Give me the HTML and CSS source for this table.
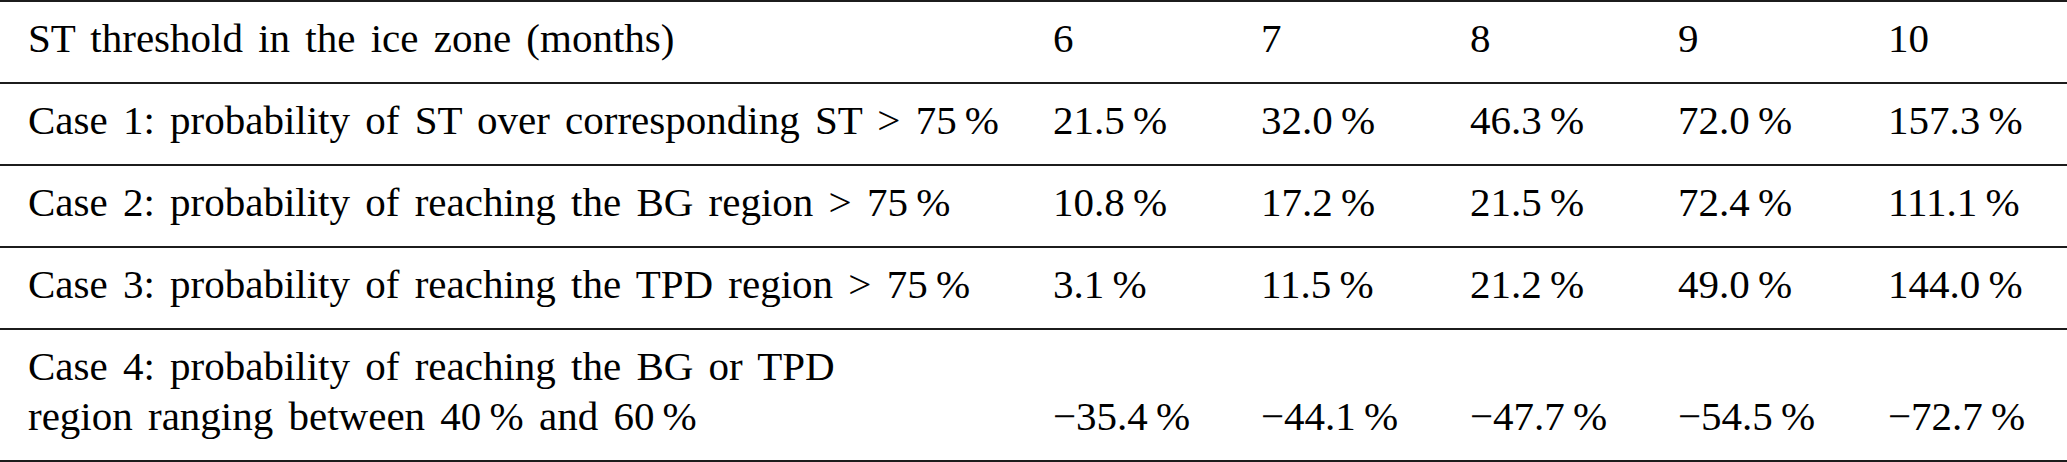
FILE: index.html
```html
<!DOCTYPE html>
<html lang="en">
<head>
    <meta charset="UTF-8">
    <title>ST threshold cases</title>
    <link rel="stylesheet" href="styles.css">
</head>
<body>
    <table class="results">
        <colgroup>
            <col class="col-label">
            <col class="col-6">
            <col class="col-7">
            <col class="col-8">
            <col class="col-9">
            <col class="col-10">
        </colgroup>
        <thead>
            <tr>
                <th class="label">ST threshold in the ice zone (months)</th>
                <th>6</th>
                <th>7</th>
                <th>8</th>
                <th>9</th>
                <th>10</th>
            </tr>
        </thead>
        <tbody>
            <tr>
                <td class="label">Case 1: probability of ST over corresponding ST &gt; 75&thinsp;%</td>
                <td>21.5&thinsp;%</td>
                <td>32.0&thinsp;%</td>
                <td>46.3&thinsp;%</td>
                <td>72.0&thinsp;%</td>
                <td>157.3&thinsp;%</td>
            </tr>
            <tr>
                <td class="label">Case 2: probability of reaching the BG region &gt; 75&thinsp;%</td>
                <td>10.8&thinsp;%</td>
                <td>17.2&thinsp;%</td>
                <td>21.5&thinsp;%</td>
                <td>72.4&thinsp;%</td>
                <td>111.1&thinsp;%</td>
            </tr>
            <tr>
                <td class="label">Case 3: probability of reaching the TPD region &gt; 75&thinsp;%</td>
                <td>3.1&thinsp;%</td>
                <td>11.5&thinsp;%</td>
                <td>21.2&thinsp;%</td>
                <td>49.0&thinsp;%</td>
                <td>144.0&thinsp;%</td>
            </tr>
            <tr>
                <td class="label">Case 4: probability of reaching the BG or TPD<br>region ranging between 40&thinsp;% and 60&thinsp;%</td>
                <td>&minus;35.4&thinsp;%</td>
                <td>&minus;44.1&thinsp;%</td>
                <td>&minus;47.7&thinsp;%</td>
                <td>&minus;54.5&thinsp;%</td>
                <td>&minus;72.7&thinsp;%</td>
            </tr>
        </tbody>
    </table>
</body>
</html>
```

FILE: styles.css
```css
body { margin: 0; background-color: #fff; color: #000; font-family: "Liberation Serif", "Times New Roman", serif; }

.results {
    width: 2067px;
    table-layout: fixed;
    border-collapse: collapse;
    border-top: 2px solid #1c1c1c;
    font-size: 41px;
}
.results col.col-label { width: 1025px; }
.results col.col-6 { width: 208px; }
.results col.col-7 { width: 209px; }
.results col.col-8 { width: 208px; }
.results col.col-9 { width: 210px; }
.results col.col-10 { width: 207px; }

.results th, .results td {
    padding: 11px 28px 19px 28px;
    line-height: 50px;
    text-align: left;
    font-weight: normal;
    vertical-align: bottom;
    white-space: nowrap;
    border-bottom: 2px solid #1c1c1c;
}
.results .label { word-spacing: 5px; }
```
